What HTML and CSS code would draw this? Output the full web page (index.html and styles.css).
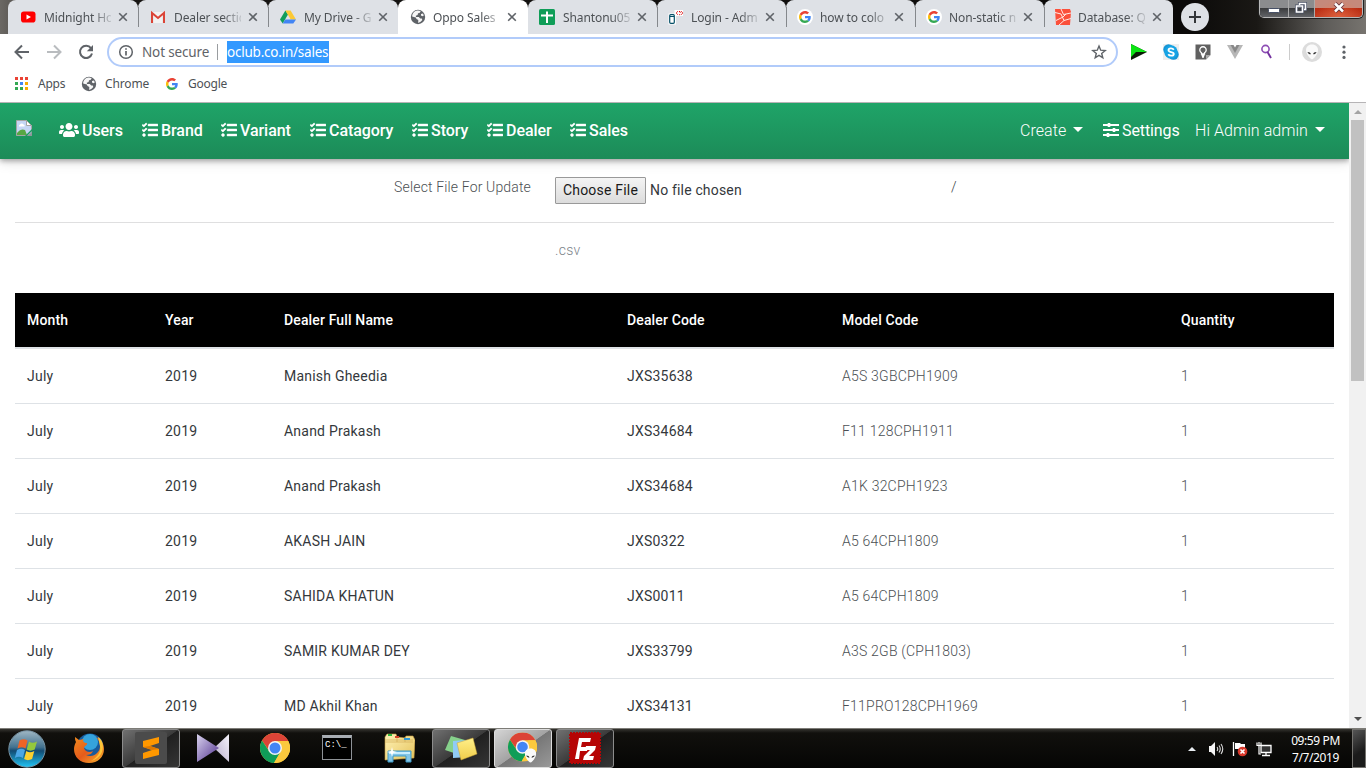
FILE: index.html
```html
<!DOCTYPE html>
<html lang="en">
<head>
<meta charset="utf-8">
<title>Oppo Sales</title>
<link rel="stylesheet" href="styles.css">
</head>
<body>
<svg width="0" height="0" class="defs">
<defs>
<linearGradient id="orb" x1="0" y1="0" x2="0" y2="1"><stop offset="0" stop-color="#9fb7c4"/><stop offset=".45" stop-color="#43728f"/><stop offset=".55" stop-color="#124b73"/><stop offset="1" stop-color="#20c5f5"/></linearGradient>
<linearGradient id="fox" x1="0" y1="0" x2="1" y2="1"><stop offset="0" stop-color="#f08a1d"/><stop offset=".5" stop-color="#e55b1b"/><stop offset="1" stop-color="#f9b32c"/></linearGradient>
<linearGradient id="kml" x1="0" y1="0" x2="1" y2="1"><stop offset="0" stop-color="#d9d3ee"/><stop offset="1" stop-color="#50308e"/></linearGradient>
<linearGradient id="kmr" x1="1" y1="0" x2="0" y2="1"><stop offset="0" stop-color="#f5f2fa"/><stop offset="1" stop-color="#b5abca"/></linearGradient>
<linearGradient id="folder" x1="0" y1="0" x2="1" y2="1"><stop offset="0" stop-color="#fff3b8"/><stop offset="1" stop-color="#e5c25a"/></linearGradient>
<linearGradient id="yel" x1="0" y1="0" x2="0" y2="1"><stop offset="0" stop-color="#fff08a"/><stop offset="1" stop-color="#f0cd4a"/></linearGradient>
<symbol id="x" viewBox="0 0 10 10"><path d="M1.2 1.2l7.6 7.6M8.8 1.2L1.2 8.8" stroke="#5f6368" stroke-width="1.6"/></symbol>
<symbol id="g" viewBox="0 0 48 48"><path fill="#ea4335" d="M24 9.5c3.54 0 6.71 1.22 9.21 3.6l6.85-6.85C35.9 2.38 30.47 0 24 0 14.62 0 6.51 5.38 2.56 13.22l7.98 6.19C12.43 13.72 17.74 9.5 24 9.5z"/><path fill="#4285f4" d="M46.98 24.55c0-1.57-.15-3.09-.38-4.55H24v9.02h12.94c-.58 2.96-2.26 5.48-4.78 7.18l7.73 6c4.51-4.18 7.09-10.36 7.09-17.65z"/><path fill="#fbbc05" d="M10.53 28.59A14.5 14.5 0 0 1 9.77 24c0-1.6.27-3.14.76-4.59l-7.98-6.19A24 24 0 0 0 0 24c0 3.88.92 7.54 2.56 10.78z"/><path fill="#34a853" d="M24 48c6.48 0 11.93-2.13 15.89-5.81l-7.73-6c-2.15 1.45-4.92 2.3-8.16 2.3-6.26 0-11.57-4.22-13.47-9.91l-7.98 6.19C6.51 42.62 14.62 48 24 48z"/></symbol>
<symbol id="globe" viewBox="0 0 16 16"><circle cx="8" cy="8" r="7.2" fill="#5f6368"/><path d="M5 2.2c1.2-.7 4-1 5.7.1L9.5 4 8 4.2 7.600 6 5.800 6.800 6 8h2.800l1.400 1.600h1.600l.5 1.500-1.700 1.600-2.400 1.200L8.300 11 6.500 10 5.800 8.500 2.100 7.500C2.100 5.500 3.300 3.200 5 2.200zM11 5l2-.6.8 2.100-1.400.8L11 6.600z" fill="#fff" opacity=".95"/></symbol>
<symbol id="tasks" viewBox="0 0 512 512"><path fill="#fff" stroke="#fff" stroke-width="14" d="M139.600 35.500a12 12 0 0 0-17 0L58.900 98.800l-22.700-22.100a12 12 0 0 0-17 0L3.500 92.400a12 12 0 0 0 0 17l47.600 47.400a12.800 12.800 0 0 0 17.600 0l15.600-15.600L156.500 69a12.100 12.100 0 0 0 .1-17zm0 159.200a12 12 0 0 0-17 0l-63.700 63.700-22.700-22.100a12 12 0 0 0-17 0L3.500 252a12 12 0 0 0 0 17L51 316.500a12.800 12.800 0 0 0 17.600 0l15.700-15.700 72.200-72.200a12 12 0 0 0 .1-16.900zM64 368c-26.500 0-48.600 21.500-48.600 48S37.500 464 64 464a48 48 0 0 0 0-96zm432 16H208a16 16 0 0 0-16 16v32a16 16 0 0 0 16 16h288a16 16 0 0 0 16-16v-32a16 16 0 0 0-16-16zm0-320H208a16 16 0 0 0-16 16v32a16 16 0 0 0 16 16h288a16 16 0 0 0 16-16V80a16 16 0 0 0-16-16zm0 160H208a16 16 0 0 0-16 16v32a16 16 0 0 0 16 16h288a16 16 0 0 0 16-16v-32a16 16 0 0 0-16-16z"/></symbol>
<symbol id="chrome" viewBox="0 0 30 30"><circle cx="15" cy="15" r="15" fill="#fbc93d"/><path d="M15 8h13.300A15 15 0 0 0 2 7.500l7 10z" fill="#db4437"/><path d="M2 7.500A15 15 0 0 0 14 30l7-12H9z" fill="#0f9d58"/><path d="M14 30l7-12V8h7.300A15 15 0 0 1 14 30z" fill="#fbc93d"/><circle cx="15" cy="15" r="7" fill="#f4f4f4"/><circle cx="15" cy="15" r="5.500" fill="#4285f4"/></symbol>
<symbol id="alien" viewBox="0 0 14 16"><path d="M7 .5c4 0 6 2.500 6 5.500 0 4-4 9-6 9.500C5 15 1 10 1 6 1 3 3 .5 7 .5z" fill="#fafafa"/><path d="M2.500 8c2 0 3.200.9 3.300 2.300-1.600 0-2.900-.7-3.300-2.300zM11.500 8c-2 0-3.200.9-3.300 2.300 1.600 0 2.900-.7 3.300-2.300z" fill="#333"/></symbol>
</defs></svg>
<div class="screen">
<header class="tabstrip">
<div class="tab first"><svg class="fav" viewBox="0 0 16 16"><rect x="1" y="2.500" width="14.500" height="11" rx="2.800" fill="#f00"/><path d="M6.500 5.500v5L11 8z" fill="#fff"/></svg><span class="title">Midnight Ho</span><svg class="close"><use href="#x"/></svg></div>
<div class="tab"><svg class="fav" viewBox="0 0 16 16"><path d="M1 3h14v11H1z" fill="#f2f2f2"/><path d="M3 14V5l5 4 5-4v9" fill="none" stroke="#ddd"/><path d="M2 14V4l6 5 6-5v10" fill="none" stroke="#db4437" stroke-width="2"/></svg><span class="title">Dealer sectic</span><svg class="close"><use href="#x"/></svg></div>
<div class="tab"><svg class="fav" viewBox="0 0 16 16"><path d="M5.400 1.500L0 10.500l2.700 4 5.300-9z" fill="#109d59"/><path d="M5.400 1.500h5.200L16 10.500h-5.300z" fill="#fcc934"/><path d="M5.300 10.500H16l-2.700 4H2.700z" fill="#4285f4"/></svg><span class="title">My Drive - G</span><svg class="close"><use href="#x"/></svg></div>
<div class="tab active"><svg class="fav"><use href="#globe"/></svg><span class="title">Oppo Sales</span><svg class="close"><use href="#x"/></svg></div>
<div class="tab after"><svg class="fav" viewBox="0 0 16 16"><rect width="16" height="16" rx="1.500" fill="#0f9d58"/><path d="M2 6.500h12M8 2.500V14" stroke="#fff" stroke-width="2"/></svg><span class="title">Shantonu05</span><svg class="close"><use href="#x"/></svg></div>
<div class="tab late"><svg class="fav" viewBox="0 0 16 16"><path d="M.5 4.500h6V1H15v6H8v8.500H.5z" fill="#fff"/><rect x="1.700" y="5.700" width="4.600" height="8.600" rx="1" fill="#fff" stroke="#075168" stroke-width="1.200"/><path d="M2 7.500h4" stroke="#075168"/><path d="M10 2L8.200 4 10 6M11 2.500h1.200V4M13 2l1.800 2L13 6M11.700 5.200v1" fill="none" stroke="#e00000" stroke-width="1" stroke-dasharray="1 .5"/></svg><span class="title">Login - Adm</span><svg class="close"><use href="#x"/></svg></div>
<div class="tab late"><span class="fav gicon"><svg width="12" height="12"><use href="#g"/></svg></span><span class="title">how to colo</span><svg class="close"><use href="#x"/></svg></div>
<div class="tab late"><span class="fav gicon"><svg width="12" height="12"><use href="#g"/></svg></span><span class="title">Non-static n</span><svg class="close"><use href="#x"/></svg></div>
<div class="tab late"><svg class="fav" viewBox="0 0 16 16"><path d="M0 0h15l1 3-1 13H1z" fill="#fb503b"/><path d="M0 3.500l6 1.500 3 6.500 7-2M6 0l2.500 5.500L16 4M1 11.500l7-3.500 3-3M4 16l5-4.500" fill="none" stroke="#ffe9e6" stroke-width="1"/></svg><span class="title">Database: Q</span><svg class="close"><use href="#x"/></svg></div>
<span class="newtab"><svg width="12" height="12" viewBox="0 0 12 12"><path d="M6 0v12M0 6h12" stroke="#333639" stroke-width="2"/></svg></span>
<div class="winbtns"><i><svg width="12" height="5" viewBox="0 0 12 5"><rect x=".5" y=".5" width="11" height="4" rx="1" fill="#fff" stroke="#465067"/></svg></i><i><svg width="12" height="12" viewBox="0 0 12 12"><path d="M4.500 3V1.500h6v6H9M1.500 4h6v6h-6z" fill="none" stroke="#4b5265" stroke-width="3"/><path d="M4.500 3V1.500h6v6H9M1.500 4h6v6h-6z" fill="none" stroke="#fff" stroke-width="1.600"/></svg></i><i class="red"><svg width="12" height="11" viewBox="0 0 12 11"><path d="M2 1.500l8 8M10 1.500l-8 8" stroke="#62313a" stroke-width="4.200"/><path d="M2 1.500l8 8M10 1.500l-8 8" stroke="#fff" stroke-width="2.500"/></svg></i></div>
</header>
<div class="toolbar">
<svg width="16" height="16" viewBox="0 0 16 16" class="back"><path d="M15 8H2M8 1.500L1.500 8 8 14.500" fill="none" stroke="#5f6368" stroke-width="2"/></svg>
<svg width="16" height="16" viewBox="0 0 16 16" class="fwd"><path d="M1 8h13M8 1.500L14.500 8 8 14.500" fill="none" stroke="#b9bcbf" stroke-width="2"/></svg>
<svg width="16" height="16" viewBox="0 0 16 16" class="reload"><path d="M13 4.200A6.100 6.100 0 1 0 14 9.500" fill="none" stroke="#5f6368" stroke-width="2"/><path d="M15 1v6.200H8.800z" fill="#5f6368"/></svg>
<div class="omnibox"><svg width="16" height="16" viewBox="0 0 16 16"><circle cx="8" cy="8" r="6.300" fill="none" stroke="#5f6368" stroke-width="1.500"/><path d="M8 7v4.500M8 4.200v1.600" stroke="#5f6368" stroke-width="1.700"/></svg><span class="notsec">Not secure</span><i class="bar"></i><span class="url">oclub.co.in/sales</span><svg class="star" width="16" height="16" viewBox="0 0 16 16"><path d="M8 2l1.700 4.200 4.500.3-3.500 2.900 1.100 4.400L8 11.400l-3.800 2.400 1.100-4.400-3.500-2.900 4.500-.3z" fill="none" stroke="#5f6368" stroke-width="1.400"/></svg></div>
<div class="exts">
<svg width="16" height="16" viewBox="0 0 16 16"><path d="M0 0l16 8L0 16z" fill="#0b1c05"/><path d="M0 0l16 8H5L0 13z" fill="#0be413"/></svg>
<svg width="16" height="16" viewBox="0 0 16 16"><rect width="16" height="16" fill="#eee"/><circle cx="5.500" cy="5.500" r="5.200" fill="#1595d6"/><circle cx="10.500" cy="10.500" r="5.200" fill="#1595d6"/><circle cx="8" cy="8" r="6.700" fill="#16a3e4"/><path d="M10.800 5.700C9.500 3.800 5.500 4 5.500 6.200c0 2.400 5.300 1.200 5.300 3.700 0 2.200-4.300 2.300-5.500.3" fill="none" stroke="#fff" stroke-width="1.800"/></svg>
<svg width="16" height="16" viewBox="0 0 16 16"><path d="M.5.500h15V11l-4.500 4.500H.5z" fill="#606060"/><path d="M15.500 11L11 15.500V11z" fill="#aaa"/><path d="M6.500 10V8.800a3.200 3.200 0 1 1 3 0V10zM6.500 11.500h3M7 13h2" fill="none" stroke="#fff" stroke-width="1.300"/></svg>
<svg width="16" height="16" viewBox="0 0 16 16"><path d="M0 1h4l4 7 4-7h4L8 15z" fill="#b7b7b7"/><path d="M3.500 1h3L8 3.500 9.500 1h3L8 9z" fill="#888"/></svg>
<svg width="16" height="16" viewBox="0 0 16 16"><circle cx="6.500" cy="5" r="3.600" fill="none" stroke="#8d4db4" stroke-width="1.600"/><path d="M8.500 8l3.500 6" stroke="#73309e" stroke-width="1.900"/></svg>
<i class="divider"></i>
<span class="avatar"><svg width="14" height="16"><use href="#alien"/></svg></span>
<svg class="kebab" width="4" height="16" viewBox="0 0 4 16"><circle cx="2" cy="3" r="1.600" fill="#5f6368"/><circle cx="2" cy="8.200" r="1.600" fill="#5f6368"/><circle cx="2" cy="13.400" r="1.600" fill="#5f6368"/></svg>
</div>
</div>
<div class="bookmarks">
<div class="bm apps"><svg width="14" height="14" viewBox="0 0 14 14"><path d="M0 0h3v3H0zM5 0h3v3H5zM10 0h3v3h-3z" fill="#ea4335"/><path d="M0 5h3v3H0z" fill="#34a853"/><path d="M5 5h3v3H5z" fill="#4285f4"/><path d="M10 5h3v3h-3z" fill="#f9ab00"/><path d="M0 10h3v3H0zM5 10h3v3H5z" fill="#34a853"/><path d="M10 10h3v3h-3z" fill="#f9ab00"/></svg><span>Apps</span></div>
<div class="bm chr"><svg width="16" height="16"><use href="#globe"/></svg><span>Chrome</span></div>
<div class="bm goo"><svg width="12" height="12"><use href="#g"/></svg><span>Google</span></div>
</div>
<div class="viewport">
<main class="page">
<nav class="navbar">
<svg class="broken" width="16" height="16" viewBox="0 0 16 16"><path d="M.5.500h10l5 5v10H.5z" fill="#c5d6f5" stroke="#a5a5a5"/><path d="M10.500.500v5h5z" fill="#fff" stroke="#a5a5a5"/><path d="M3 6.500a1.500 1.500 0 0 1 1-2 2 2 0 0 1 3.500 0 1.300 1.300 0 0 1 1 2z" fill="#fff"/><path d="M1 15v-2c3-4 6-4 8-3l2 5z" fill="#58a744"/><path d="M9 16l7-7v2l-5 5z" fill="#1d9a60"/><path d="M11 16l5-4v4z" fill="#8d989b"/></svg>
<a class="n1 wide"><svg viewBox="0 0 640 512"><path fill="#fff" d="M96 224c35.300 0 64-28.700 64-64s-28.700-64-64-64-64 28.700-64 64 28.700 64 64 64zm448 0c35.300 0 64-28.700 64-64s-28.700-64-64-64-64 28.700-64 64 28.700 64 64 64zm32 32h-64c-17.600 0-33.500 7.100-45.100 18.600 40.300 22.100 68.900 62 75.100 109.400h66c17.700 0 32-14.300 32-32v-32c0-35.300-28.700-64-64-64zm-256 0c61.900 0 112-50.100 112-112S381.900 32 320 32 208 82.100 208 144s50.100 112 112 112zm76.800 32h-8.300c-20.800 10-43.900 16-68.500 16s-47.600-6-68.500-16h-8.300C179.600 288 128 339.600 128 403.200V432c0 26.500 21.500 48 48 48h288c26.500 0 48-21.500 48-48v-28.800c0-63.600-51.600-115.200-115.200-115.200zm-223.700-13.400C161.500 263.100 145.600 256 128 256H64c-35.300 0-64 28.700-64 64v32c0 17.700 14.300 32 32 32h65.900c6.300-47.400 34.900-87.300 75.200-109.400z"/></svg>Users</a>
<a class="n2"><svg><use href="#tasks"/></svg>Brand</a>
<a class="n3"><svg><use href="#tasks"/></svg>Variant</a>
<a class="n4"><svg><use href="#tasks"/></svg>Catagory</a>
<a class="n5"><svg><use href="#tasks"/></svg>Story</a>
<a class="n6"><svg><use href="#tasks"/></svg>Dealer</a>
<a class="n7"><svg><use href="#tasks"/></svg>Sales</a>
<div class="right">
<a class="r1">Create<i class="caret"></i></a>
<a class="r2"><svg viewBox="0 0 16 16"><path d="M0 3h16M0 8h16M0 13h16" stroke="#fff" stroke-width="1.800"/><path d="M6 1v4M11 6v4M5 11v4" stroke="#fff" stroke-width="2.600"/></svg>Settings</a>
<a class="r3">Hi Admin admin<i class="caret"></i></a>
</div>
</nav>
<section class="upload"><label>Select File For Update</label><div class="file"><button>Choose File</button><span>No file chosen</span></div><span class="slash">/</span></section>
<p class="hint">.csv</p>
<table>
<colgroup><col class="c1"><col class="c2"><col class="c3"><col class="c4"><col class="c5"><col class="c6"></colgroup>
<thead><tr><th>Month</th><th>Year</th><th>Dealer Full Name</th><th>Dealer Code</th><th>Model Code</th><th>Quantity</th></tr></thead>
<tbody>
<tr><td>July</td><td>2019</td><td>Manish Gheedia</td><td>JXS35638</td><td>A5S 3GBCPH1909</td><td>1</td></tr>
<tr><td>July</td><td>2019</td><td>Anand Prakash</td><td>JXS34684</td><td>F11 128CPH1911</td><td>1</td></tr>
<tr><td>July</td><td>2019</td><td>Anand Prakash</td><td>JXS34684</td><td>A1K 32CPH1923</td><td>1</td></tr>
<tr><td>July</td><td>2019</td><td>AKASH JAIN</td><td>JXS0322</td><td>A5 64CPH1809</td><td>1</td></tr>
<tr><td>July</td><td>2019</td><td>SAHIDA KHATUN</td><td>JXS0011</td><td>A5 64CPH1809</td><td>1</td></tr>
<tr><td>July</td><td>2019</td><td>SAMIR KUMAR DEY</td><td>JXS33799</td><td>A3S 2GB (CPH1803)</td><td>1</td></tr>
<tr><td>July</td><td>2019</td><td>MD Akhil Khan</td><td>JXS34131</td><td>F11PRO128CPH1969</td><td>1</td></tr>
</tbody></table>
</main>
<aside class="scrollbar"><i class="up"></i><i class="thumb"></i><i class="down"></i></aside>
</div>
<footer class="taskbar">
<div class="start"><svg width="40" height="40" viewBox="0 0 40 40"><circle cx="20" cy="20" r="18.200" fill="url(#orb)" stroke="#7893a3" stroke-width="1"/><path d="M12.500 11.500c3-1.800 5.500-1.700 8 0l-2 8c-2.500-1.700-5-1.700-8 0z" fill="#ef6425"/><path d="M22 12.500c2.500 1.700 5 1.500 8 0l-2.300 8c-3 1.500-5.500 1.500-8 0z" fill="#94c83d"/><path d="M10 21c3-1.700 5.500-1.700 8 0l-2.200 8c-2.500-1.700-5-1.700-8 0z" fill="#4aa6e6"/><path d="M19.300 22c2.500 1.700 5 1.500 8 0l-2.200 8c-3 1.500-5.500 1.500-8 0z" fill="#fcd02f"/></svg></div>
<div class="slot"><svg width="30" height="30" viewBox="0 0 30 30"><circle cx="16" cy="14" r="13.500" fill="#175a9c"/><circle cx="16" cy="9" r="8" fill="#35a3dc"/><path d="M1 4l4 3 5-1c-2 2 0 4 3 4 1 2-3 3-3 5 1 4 6 5 9 3-1 3-4 4-7 4 7 3 14-2 14-9 0-4-2-7-4-9 5 2 8 7 8 12 0 8-6 14-15 14S0 24 0 16c0-3 1-5 2-7-1-2-1-3-1-5z" fill="url(#fox)"/><path d="M24 4c5 3 6 9 4 15-2 5-7 8-11 9 7-4 10-9 9-15z" fill="#fbc539"/></svg></div>
<div class="slot open"><svg width="32" height="32" viewBox="0 0 32 32"><rect width="32" height="32" rx="2" fill="#4b4b4b"/><path d="M24 5v6l-9 3 9 3v6L8 27v-6l9-3-9-3V9z" fill="#ff9800"/><path d="M8 15l9 3 7-1-9-3z" fill="#df7900"/></svg></div>
<div class="slot"><svg width="32" height="30" viewBox="0 0 32 30"><path d="M32 1v28L17 15z" fill="url(#kmr)"/><path d="M0 1l22 14L0 29z" fill="url(#kml)"/></svg></div>
<div class="slot"><svg width="30" height="30"><use href="#chrome"/></svg></div>
<div class="slot"><span class="cmd"><b>C:\_</b></span></div>
<div class="slot"><svg width="32" height="30" viewBox="0 0 32 30"><path d="M2 4l2-3h9l1 3 8 1 1-2h7l2 4-1 18-29 2z" fill="url(#folder)" stroke="#c59b42" stroke-width=".6"/><path d="M2 9h28M2 7h28M14 4v5M22 4v5" stroke="#d2ad56" stroke-width=".7"/><path d="M5 2h4" stroke="#2eb33c" stroke-width="2"/><path d="M12 4h4" stroke="#d74529" stroke-width="2"/><path d="M21 6h6" stroke="#3298d5" stroke-width="2"/><path d="M5 29V18h23v11h-5v-6H10v6z" fill="#82c5e8" stroke="#409ac6"/><path d="M6 20h21" stroke="#c7edff" stroke-width="2"/><path d="M9 14l1 4 4 1-4 1-1 4-1-4-4-1 4-1z" fill="#fff"/></svg></div>
<div class="slot open"><svg width="34" height="28" viewBox="0 0 34 28"><path d="M7 2l14 4-5 15L1 16z" fill="#86d18b"/><path d="M9 7l14-1 1 17-15 1z" fill="#90cbf5"/><path d="M13 9l16-5 4 16-16 6z" fill="url(#yel)" stroke="#c6a334" stroke-width=".5"/></svg></div>
<div class="slot open bright"><svg width="30" height="31" viewBox="0 0 30 31"><svg width="29" height="30" viewBox="0 0 30 30"><use href="#chrome"/></svg><svg x="16" y="16" width="13" height="15" viewBox="0 0 14 16"><use href="#alien"/></svg></svg></div>
<div class="slot open"><svg width="32" height="32" viewBox="0 0 32 32"><rect x="1" y="1" width="30" height="30" fill="#b60505" stroke="#b60505" stroke-width="2" stroke-dasharray="2 1"/><path d="M6 27L10 6h12l-1 4h-8l-1 5h7l-1 4h-7l-1 8z" fill="#fff"/><path d="M17 14h10l-1 4-6 6h5l-1 4H14l1-4 6-6h-5z" fill="#fff"/></svg></div>
<div class="tray">
<svg width="8" height="4" viewBox="0 0 8 4"><path d="M0 4l4-4 4 4z" fill="#e8edf1"/></svg>
<svg width="16" height="14" viewBox="0 0 16 14"><path d="M1 4h2l4-4v14l-4-4H1z" fill="#f5f5f5"/><path d="M9 5q1.500 2 0 4M11 3.500q2.500 3.500 0 7M13 2q3.500 5 0 10" fill="none" stroke="#ddd" stroke-width="1.100"/></svg>
<svg width="16" height="16" viewBox="0 0 16 16"><path d="M1.500 1v14" stroke="#fff" stroke-width="1.300"/><path d="M3 2h5l1 1h4v6H8L7 8H3z" fill="#fff"/><circle cx="10.500" cy="10.500" r="4.800" fill="#d9382b"/><path d="M8.500 8.500l4 4M12.500 8.500l-4 4" stroke="#fff" stroke-width="1.600"/></svg>
<svg width="16" height="16" viewBox="0 0 16 16"><path d="M5 4.500h10v7H5zM10 12v2.500M6 14.500h8" fill="#333" stroke="#fff" stroke-width="1.300"/><path d="M1 1.500v3h4v-3M3 1v3.500M3 5v8h2" fill="none" stroke="#fff" stroke-width="1.200"/></svg>
</div>
<div class="clock"><span>09:59 PM</span><span>7/7/2019</span></div>
<div class="peek"></div>
</footer>
</div>
</body>
</html>
```
FILE: styles.css
```css
* { box-sizing: border-box; }
html, body { margin: 0; overflow: hidden; }
body { font-family: Roboto, sans-serif; background: #fff; }
.defs { position: absolute; }
svg { display: block; flex: none; }
.screen { width: 1366px; height: 768px; display: flex; flex-direction: column; overflow: hidden; }

/* browser tabs */
.tabstrip { height: 34px; flex: none; display: flex; padding-left: 8px; background: linear-gradient(90deg, #6b6864 0, #171513 5%, #0b0a09 87%, #1a1815 92%, #5e5c59 97%, #77746f 100%); font-family: "Noto Sans", sans-serif; font-size: 12px; color: #4d5155; }
.tab { width: 130px; flex: none; display: flex; align-items: center; padding: 0 0 0 12px; background: #dee1e6; border-radius: 8px 8px 0 0; position: relative; }
.tab::before { content: ""; width: 1px; height: 20px; position: absolute; left: 0; top: 7px; background: #85888c; }
.tab.first::before, .tab.active::before, .tab.after::before { display: none; }
.tab.active { background: #fff; }
.tab.after, .tab.late { width: 129px; padding-left: 11px; }
.tab.active .title, .tab.late .title { margin-left: 7px; }
.fav { width: 16px; height: 16px; flex: none; }
.gicon { border-radius: 50%; background: #fff; display: flex; align-items: center; justify-content: center; }
.title { margin-left: 8px; width: 67px; flex: none; white-space: nowrap; letter-spacing: -.1px; -webkit-mask-image: linear-gradient(90deg, #000 72%, rgba(0,0,0,.2) 100%); mask-image: linear-gradient(90deg, #000 72%, rgba(0,0,0,.2) 100%); }
.close { width: 10px; height: 10px; margin-left: 7px; }
.newtab { width: 28px; height: 28px; margin: 3px 0 0 8px; border-radius: 50%; background: #dee1e6; display: flex; align-items: center; justify-content: center; flex: none; }
.winbtns { display: flex; height: 18px; width: 104px; margin-left: auto; margin-right: 3px; border: 1px solid #b8b8b8; border-top: 0; border-radius: 0 0 5px 5px; overflow: hidden; box-shadow: 0 0 0 1px #222; }
.winbtns i { width: 29px; display: flex; align-items: center; justify-content: center; padding-bottom: 2px; border-right: 1px solid #aaa; background: linear-gradient(#8b8c8e 0 45%, #393a3c 46%, #626468); }
.winbtns i:nth-child(2) { width: 26px; padding-right: 2px; }
.winbtns i:first-child { padding: 3px 0 0; }
.winbtns i.red { flex: 1; border: 0; background: radial-gradient(ellipse at 50% 100%, rgba(240,120,80,.6), transparent 70%), linear-gradient(#c5897b 0 45%, #b82a10 46%, #c23d22); }

/* address bar */
.toolbar { height: 36px; flex: none; display: flex; align-items: center; background: #fff; }
.back { margin-left: 14px; }
.fwd { margin-left: 16px; }
.reload { margin-left: 16px; }
.omnibox { width: 1011px; height: 30px; margin-left: 13px; border: 2px solid #b1cbfa; border-radius: 15px; display: flex; align-items: center; padding: 0 9px; font: 14px "Noto Sans", sans-serif; color: #5f6368; white-space: nowrap; }
.notsec { width: 68px; margin-left: 8px; font-size: 13.500px; letter-spacing: -.15px; }
.bar { width: 1px; height: 16px; background: #9a9da0; margin: 0 9px 0 7px; }
.url { height: 22px; width: 102px; line-height: 23px; background: #3399ff; color: #fff; font-size: 13.500px; letter-spacing: -.22px; }
.star { margin-left: auto; }
.exts { flex: 1; display: flex; align-items: center; gap: 16px; padding-left: 13px; }
.divider { width: 1px; height: 16px; background: #ccc; margin: 0 -6px 0 -2px; }
.avatar { width: 20px; height: 20px; margin: 0 2px; border-radius: 50%; background: #dcdcdc; display: flex; align-items: center; justify-content: center; }
.kebab { margin-left: 2px; }
.bookmarks { height: 33px; flex: none; display: flex; align-items: center; padding-bottom: 5px; border-bottom: 1px solid #b6b4b6; font: 12px "Noto Sans", sans-serif; color: #4d5155; }
.bm { display: flex; align-items: center; gap: 8px; letter-spacing: -.25px; }
.apps { margin-left: 15px; width: 66px; gap: 9px; }
.chr { width: 85px; letter-spacing: -.15px; }
.goo { gap: 10px; }

/* web page */
.viewport { flex: 1; min-height: 0; display: flex; }
.page { width: 1349px; overflow: hidden; }
.scrollbar { width: 17px; background: #f1f1f1; display: flex; flex-direction: column; align-items: center; }
.up, .down { border: 4px solid transparent; width: 0; height: 0; }
.up { border-bottom-color: #a3a3a3; border-top: 0; margin-top: 7px; }
.thumb { width: 13px; height: 261px; background: #c1c1c1; margin-top: 6px; }
.down { border-top-color: #505050; border-bottom: 0; margin: auto 0 7px; }
.navbar { height: 56px; display: flex; align-items: center; padding: 0 0 2px 16px; background: linear-gradient(#1fa468, #1c8b58); box-shadow: 0 2px 5px rgba(0,0,0,.3), 0 3px 12px rgba(0,0,0,.13); color: #fff; font-size: 16px; font-weight: 500; letter-spacing: -.05px; }
.broken { margin: 0 27px 5px 0; }
.navbar a { display: flex; align-items: center; white-space: nowrap; flex: none; }
.navbar a svg { width: 16px; height: 16px; margin-right: 3px; }
.navbar .wide svg { width: 20px; }
.n1 { width: 83px; } .n2 { width: 79px; } .n3 { width: 89px; } .n4 { width: 102px; } .n5 { width: 75px; } .n6 { width: 83px; }
.right { display: flex; margin-left: auto; font-weight: 400; }
.r1 { width: 83px; } .r2 { width: 92px; } .r3 { width: 154px; }
.navbar .r2 { font-weight: 400; letter-spacing: -.1px; }
.navbar .r1, .navbar .r3 { font-weight: 350; letter-spacing: .05px; }
.caret { border: 5px solid transparent; border-top-color: #fff; border-bottom: 0; margin: 0 0 2px 7px; }
.upload { height: 64px; margin: 0 15px; padding-top: 18px; border-bottom: 1px solid #dfdfe0; display: flex; font-size: 14px; letter-spacing: .17px; color: #34383c; }
.upload label { width: 516px; text-align: right; line-height: 21px; font-weight: 300; letter-spacing: .15px; color: #4b4f53; }
.file { width: 396px; margin-left: 24px; display: flex; align-items: center; height: 27px; gap: 4px; }
.file span { margin-top: -2px; }
.file button { width: 91px; height: 27px; padding: 0 0 2px; border: 1px solid #999; border-radius: 1px; background: linear-gradient(#f4f4f4, #dcdcdc); font: 14px Roboto, sans-serif; letter-spacing: .2px; color: #1a1a1a; }
.slash { line-height: 21px; font-weight: 300; }
.hint { margin: 17px 0 32px 555px; height: 21px; line-height: 20px; font-size: 14px; letter-spacing: .3px; font-weight: 300; color: #7b8389; }
table { width: 1319px; margin-left: 15px; border-collapse: separate; border-spacing: 0; table-layout: fixed; font-size: 14px; letter-spacing: .22px; color: #34383c; }
.c1 { width: 138px; } .c2 { width: 119px; } .c3 { width: 343px; } .c4 { width: 215px; } .c5 { width: 339px; } .c6 { width: 165px; }
th, td { text-align: left; padding: 0 12px; }
th { height: 56px; background: #000; color: #fff; font-weight: 500; border-bottom: 2px solid #dee2e6; letter-spacing: .14px; }
td { height: 55px; border-bottom: 1px solid #dee2e6; }
td:nth-child(n+5) { font-weight: 300; color: #4b4f53; }

/* taskbar */
.taskbar { height: 40px; flex: none; display: flex; border-top: 1px solid #7d7c77; background: linear-gradient(#35342f, #11100d 4px, #050504); }
.start { width: 60px; padding-left: 7px; height: 39px; display: flex; align-items: center; }
.slot { width: 58px; height: 39px; margin-right: 4px; display: flex; align-items: center; justify-content: center; border: 1px solid transparent; border-radius: 3px; flex: none; padding-bottom: 2px; }
.slot.open { border-color: #8c8c8c; background: linear-gradient(145deg, #707070, #3b3b3b 50%, #202020 51%, #353535); }
.slot.bright { border-color: #ddd; background: linear-gradient(145deg, #d5d5d5, #a3a3a3 50%, #777 51%, #999); }
.cmd { width: 30px; height: 25px; background: #000; border: 1px solid #8e9297; border-top: 3px solid #a8adb3; color: #fff; line-height: 13px; }
.cmd b { display: block; padding: 1px 0 0 2px; font: 9px/12px "Liberation Mono", monospace; }
.tray { margin-left: auto; display: flex; align-items: center; gap: 8px; width: 90px; }
.tray svg:first-child { margin-right: 4px; }
.clock { width: 71px; padding-left: 4px; display: flex; flex-direction: column; align-items: center; justify-content: center; color: #fff; font: 12px/17px "Noto Sans", sans-serif; letter-spacing: -.4px; }
.peek { width: 14px; border: 1px solid #74736f; background: linear-gradient(145deg, #555, #1b1b1b 60%); margin-left: 3px; }
```
